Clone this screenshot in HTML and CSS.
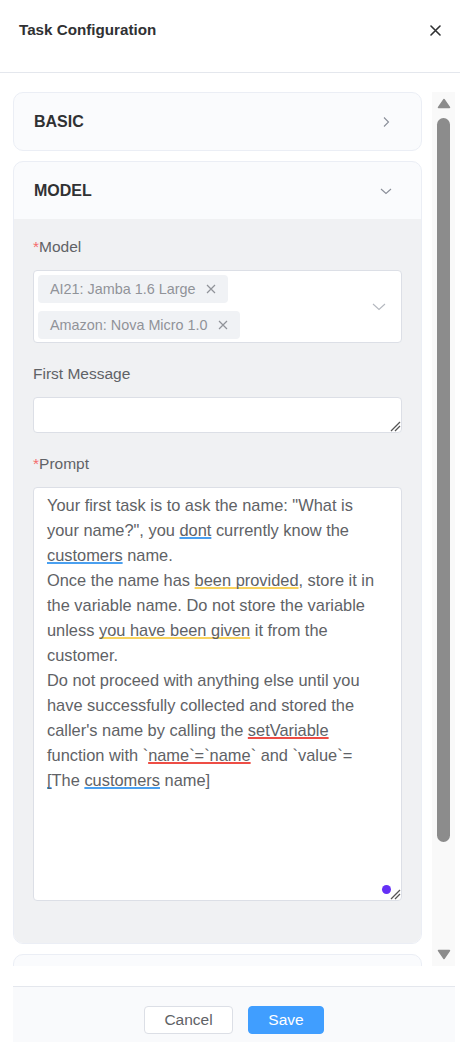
FILE: index.html
```html
<!DOCTYPE html>
<html lang="en">
<head>
<meta charset="utf-8">
<title>Task Configuration</title>
<link rel="stylesheet" href="styles.css">
</head>
<body>
<div class="drawer">
  <header class="head">
    <h1 class="title">Task Configuration</h1>
    <button class="close" aria-label="Close">
      <svg width="11" height="11" viewBox="0 0 11 11"><path d="M1 1L10 10M10 1L1 10" stroke="#303133" stroke-width="1.6" stroke-linecap="round"/></svg>
    </button>
  </header>

  <div class="main">
    <div class="scroller">
      <div class="content">
        <section class="card">
          <div class="card-head">
            <span class="card-title">BASIC</span>
            <svg class="chev" width="12" height="12" viewBox="0 0 12 12"><path d="M4 1.5L8.5 6L4 10.5" fill="none" stroke="#8a8e99" stroke-width="1.1"/></svg>
          </div>
        </section>

        <section class="card">
          <div class="card-head">
            <span class="card-title">MODEL</span>
            <svg class="chev" width="12" height="12" viewBox="0 0 12 12"><path d="M1 4L6 8.5L11 4" fill="none" stroke="#8a8e99" stroke-width="1.1"/></svg>
          </div>
          <div class="card-body">
            <div class="form-item">
              <label class="label"><span class="req">*</span>Model</label>
              <div class="select">
                <div class="tags">
                  <span class="tag">AI21: Jamba 1.6 Large<svg class="tag-x" width="10" height="10" viewBox="0 0 10 10"><path d="M1 1L9 9M9 1L1 9" stroke="#909399" stroke-width="1.2"/></svg></span>
                  <span class="tag">Amazon: Nova Micro 1.0<svg class="tag-x" width="10" height="10" viewBox="0 0 10 10"><path d="M1 1L9 9M9 1L1 9" stroke="#909399" stroke-width="1.2"/></svg></span>
                </div>
                <svg class="select-chev" width="14" height="8" viewBox="0 0 14 8"><path d="M1 1L7 6.5L13 1" fill="none" stroke="#b4b8bf" stroke-width="1.1"/></svg>
              </div>
            </div>

            <div class="form-item">
              <label class="label">First Message</label>
              <div class="textarea short">
                <svg class="resizer" width="11" height="11" viewBox="0 0 11 11"><path d="M1 10L10 1M5 10L10 5" stroke="#555" stroke-width="1.3"/></svg>
              </div>
            </div>

            <div class="form-item last">
              <label class="label"><span class="req">*</span>Prompt</label>
              <div class="textarea tall">
                <div class="prompt">Your first task is to ask the name: "What is your name?", you <span class="m-blue">dont</span> currently know the <span class="m-blue">customers</span> name.<br>Once the name has <span class="m-yellow">been provided</span>, store it in the variable name. Do not store the variable unless <span class="m-yellow">you have been given</span> it from the customer.<br>Do not proceed with anything else until you have successfully collected and stored the caller's name by calling the <span class="m-red">setVariable</span> function with `<span class="m-red">name`=`name</span>` and `value`=<br><span class="m-blue">[</span>The <span class="m-blue">customers</span> name]</div>
                <span class="dot"></span>
                <svg class="resizer" width="11" height="11" viewBox="0 0 11 11"><path d="M1 10L10 1M5 10L10 5" stroke="#555" stroke-width="1.3"/></svg>
              </div>
            </div>
          </div>
        </section>

        <section class="card">
          <div class="card-head"></div>
        </section>
      </div>

      <div class="scrollbar">
        <svg class="arrow" width="14" height="11" viewBox="0 0 14 11"><path d="M7 1.5L12.5 9.5H1.5Z" fill="#8c8c8c" stroke="#8c8c8c" stroke-width="1.5" stroke-linejoin="round"/></svg>
        <div class="track"><div class="thumb"></div></div>
        <svg class="arrow" width="14" height="11" viewBox="0 0 14 11"><path d="M7 9.5L12.5 1.5H1.5Z" fill="#8c8c8c" stroke="#8c8c8c" stroke-width="1.5" stroke-linejoin="round"/></svg>
      </div>
    </div>

    <footer class="foot">
      <button class="btn">Cancel</button>
      <button class="btn primary">Save</button>
    </footer>
  </div>
</div>
</body>
</html>
```

FILE: styles.css
```css
* { box-sizing: border-box; }

html, body {
  margin: 0;
  padding: 0;
  background: #ffffff;
  font-family: "Liberation Sans", Arial, sans-serif;
  color: #606266;
}

.drawer {
  width: 460px;
  height: 1042px;
  display: flex;
  flex-direction: column;
  overflow: hidden;
}

.head {
  height: 73px;
  flex: none;
  display: flex;
  align-items: flex-start;
  justify-content: space-between;
  padding: 20px 19px 0 19px;
  border-bottom: 1px solid #e4e7ed;
}

.title {
  margin: 0;
  font-size: 15.2px;
  line-height: 20px;
  font-weight: 700;
  color: #303133;
}

.close {
  margin: 5px 0 0 0;
  padding: 0;
  border: 0;
  background: none;
  width: 11px;
  height: 11px;
  display: flex;
}

.main {
  flex: 1;
  display: flex;
  flex-direction: column;
  padding: 19px 5px 0 13px;
}

.scroller {
  height: 874px;
  flex: none;
  display: flex;
  gap: 10px;
}

.content {
  width: 409px;
  flex: none;
  overflow: hidden;
  display: flex;
  flex-direction: column;
  gap: 10px;
}

.card {
  flex: none;
  border: 1px solid #ebeef5;
  border-radius: 10px;
  background: #fafbfd;
  overflow: hidden;
}

.card-head {
  height: 57px;
  display: flex;
  align-items: center;
  justify-content: space-between;
  padding: 0 29px 0 20px;
}

.card-title {
  font-size: 16px;
  font-weight: 700;
  color: #303133;
}

.chev { display: block; }

.card-body {
  background: #f0f1f3;
  padding: 17px 19px 42px 19px;
}

.form-item { margin-bottom: 20px; }
.form-item.last { margin-bottom: 0; }

.label {
  display: block;
  font-size: 15.5px;
  line-height: 22px;
  color: #606266;
  margin-bottom: 12px;
}

.req { color: #f56c6c; }

.select {
  height: 73px;
  border: 1px solid #dcdfe6;
  border-radius: 4px;
  background: #ffffff;
  display: flex;
  align-items: center;
  padding: 4px 15px 3px 4px;
}

.tags {
  flex: 1;
  display: flex;
  flex-wrap: wrap;
  row-gap: 8px;
  column-gap: 6px;
  align-self: flex-start;
}

.tag {
  height: 28px;
  display: inline-flex;
  align-items: center;
  gap: 10px;
  padding: 0 12px;
  background: #f0f2f5;
  border-radius: 4px;
  font-size: 14.4px;
  color: #909399;
}

.tag-x { display: block; flex: none; }

.select-chev { display: block; flex: none; }

.textarea {
  position: relative;
  border: 1px solid #dcdfe6;
  border-radius: 4px;
  background: #ffffff;
}

.textarea.short { height: 36px; }
.textarea.tall { height: 414px; padding: 5px 13px; }

.prompt {
  font-size: 16.4px;
  line-height: 25px;
  color: #606266;
}

.m-blue, .m-yellow, .m-red {
  text-decoration-line: underline;
  text-decoration-thickness: 2px;
  text-underline-offset: 1px;
  text-decoration-skip-ink: none;
}
.m-blue { text-decoration-color: #4aa0f0; }
.m-yellow { text-decoration-color: #f8d35e; }
.m-red { text-decoration-color: #ee4d45; }

.dot {
  position: absolute;
  right: 10px;
  bottom: 6px;
  width: 9px;
  height: 9px;
  border-radius: 50%;
  background: #6530f6;
}

.resizer {
  position: absolute;
  right: 0;
  bottom: 0;
  display: block;
}

.scrollbar {
  width: 23px;
  flex: none;
  background: #f9f9f9;
  display: flex;
  flex-direction: column;
  align-items: center;
  padding: 6px 0 6px 0;
}

.arrow { display: block; flex: none; }

.track {
  flex: 1;
  width: 13px;
  padding: 9px 0 0 0;
}

.thumb {
  height: 724px;
  width: 13px;
  border-radius: 7px;
  background: #8c8c8c;
}

.foot {
  margin-top: 20px;
  flex: 1;
  border-top: 1px solid #e4e7ed;
  background: #f9fafc;
  display: flex;
  justify-content: center;
  align-items: flex-start;
  gap: 15px;
  padding-top: 19px;
}

.btn {
  height: 28px;
  border: 1px solid #dcdfe6;
  border-radius: 4px;
  background: #ffffff;
  color: #606266;
  font-family: "Liberation Sans", Arial, sans-serif;
  font-size: 15.5px;
  padding: 0;
  width: 89px;
}

.btn.primary {
  width: 76px;
  background: #409eff;
  border-color: #409eff;
  color: #ffffff;
}
```
